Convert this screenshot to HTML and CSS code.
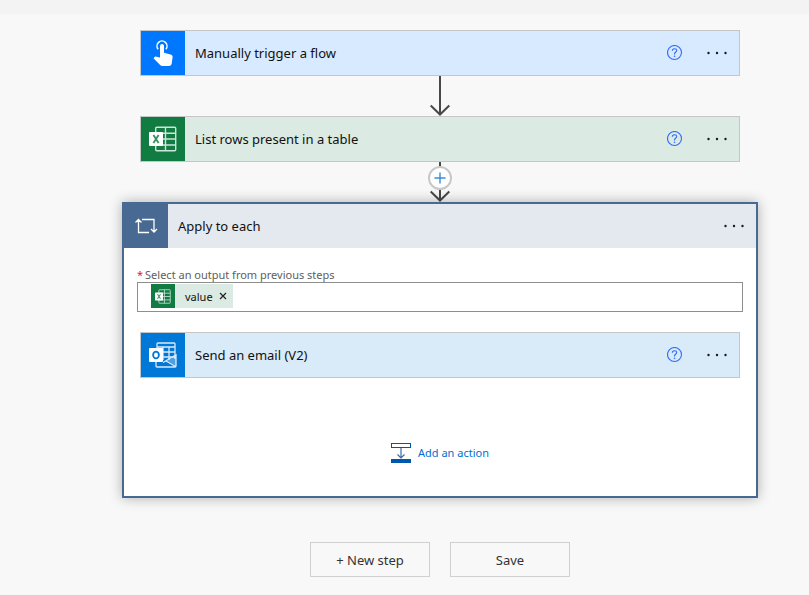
FILE: index.html
```html
<!DOCTYPE html>
<html lang="en">
<head>
<meta charset="utf-8">
<title>Flow designer</title>
<link rel="stylesheet" href="styles.css">
</head>
<body>
<svg class="defs" aria-hidden="true">
  <symbol id="excel" viewBox="0 0 28 26">
    <g fill="none" stroke="#fff" stroke-width="1.4" opacity=".8">
      <rect x="6.700" y="1.2" width="20" height="23.6" rx="1"/>
      <path d="M16.500 1.2v23.6M6.700 7.2h20M14 13h12.700M6.700 19h20"/>
    </g>
    <rect x="0" y="6" width="14" height="14" rx="1" fill="#fff"/>
    <path d="M4.400 9l5.200 8M9.600 9l-5.200 8" fill="none" stroke="#107c41" stroke-width="1.8" opacity=".85"/>
  </symbol>
  <symbol id="help" viewBox="0 0 16 16">
    <g fill="none" stroke="#2f6bff" stroke-width="1.1">
      <circle cx="7.500" cy="7.500" r="7"/>
      <path d="M5.300 5.800C5.300 4.400 6.200 3.700 7.500 3.700s2.200.8 2.200 1.900c0 1.600-2.200 1.800-2.200 3.400v.4"/>
    </g>
    <circle cx="7.500" cy="11.200" r=".8" fill="#2f6bff"/>
  </symbol>
  <symbol id="more" viewBox="0 0 22 4">
    <g fill="#1b1b1b"><circle cx="2.5" cy="2" r="1.2"/><circle cx="11" cy="2" r="1.2"/><circle cx="19.5" cy="2" r="1.2"/></g>
  </symbol>
</svg>
<div class="topbar"></div>
<main class="designer">
  <section class="card card-trigger">
    <span class="tile tile-trigger">
      <svg width="20" height="28" viewBox="0 0 20 28" aria-hidden="true">
        <path d="M5.100 10.200A5 5 0 1 1 12.900 10.200" fill="none" stroke="#fff" stroke-width="1.5"/>
        <path d="M7 7a2 2 0 0 1 4 0v6.700l6.700 1.900c1.300.4 2.100 1.400 1.900 2.700l-.9 6.200c-.2 1.500-1.200 2.500-2.700 2.500H9.500c-1 0-1.700-.4-2.400-1.100L.5 19.200l1.100-1.100c.6-.5 1.100-.6 1.800-.4L7 18.500z" fill="#fff"/>
      </svg>
    </span>
    <h2 class="title">Manually trigger a flow</h2>
    <button class="icon-button help" aria-label="Help"><svg width="16" height="16"><use href="#help"/></svg></button>
    <button class="icon-button" aria-label="More"><svg width="22" height="4"><use href="#more"/></svg></button>
  </section>

  <div class="connector">
    <svg width="24" height="40" viewBox="0 0 24 40" aria-hidden="true"><path d="M12 0v38M2.7 29.5l9.3 9 9.3-9" fill="none" stroke="#484848" stroke-width="2"/></svg>
  </div>

  <section class="card card-excel">
    <span class="tile tile-excel"><svg width="28" height="26" aria-hidden="true"><use href="#excel"/></svg></span>
    <h2 class="title">List rows present in a table</h2>
    <button class="icon-button help" aria-label="Help"><svg width="16" height="16"><use href="#help"/></svg></button>
    <button class="icon-button" aria-label="More"><svg width="22" height="4"><use href="#more"/></svg></button>
  </section>

  <div class="connector">
    <button class="insert" aria-label="Insert a step">
      <svg width="24" height="40" viewBox="0 0 24 40" aria-hidden="true">
        <path d="M12 0v38M2.7 29.5l9.3 9 9.3-9" fill="none" stroke="#484848" stroke-width="2"/>
        <circle cx="12" cy="16" r="11" fill="#fff" stroke="#c8c8c8" stroke-width="2"/>
        <path d="M12 10.5v11M6.500 16h11" fill="none" stroke="#3a8ddb" stroke-width="1.4"/>
      </svg>
    </button>
  </div>

  <section class="scope">
    <header class="scope-header">
      <span class="tile tile-scope">
        <svg width="24" height="18" viewBox="0 0 24 18" fill="none" stroke="#fff" stroke-width="1.3" aria-hidden="true">
          <path d="M15 15.500H4.500V2.500M1.500 5.500l3-3 3 3M8 2.500h12v12.500M17 12l3 3 3-3"/>
        </svg>
      </span>
      <h2 class="title">Apply to each</h2>
      <button class="icon-button" aria-label="More"><svg width="22" height="4"><use href="#more"/></svg></button>
    </header>
    <div class="scope-body">
      <label class="label" for="output"><span class="required">*</span>Select an output from previous steps</label>
      <div class="field">
        <span class="token">
          <span class="token-icon"><svg width="16" height="15" aria-hidden="true"><use href="#excel"/></svg></span>
          <span class="token-text">value</span>
          <button class="token-remove" aria-label="Remove value"><svg width="8" height="8" viewBox="0 0 8 8"><path d="M1 1l6 6M7 1L1 7" stroke="#222" stroke-width="1.2"/></svg></button>
        </span>
        <input class="field-input" id="output" type="text">
      </div>
      <section class="card card-mail">
        <span class="tile tile-mail">
          <svg width="28" height="26" viewBox="0 0 28 26" aria-hidden="true">
            <g fill="none" stroke="#fff" stroke-width="1.3" opacity=".85">
              <path d="M8 7V2q0-1 1-1h16q1 0 1 1v15M8 5h18M14 5v13M20 5v13M14 10h12M14 15h12"/>
              <path d="M7 19v5q0 1 1 1h18q1 0 1-1V13L14 20.500M17 19l9.500 5.500"/>
            </g>
            <path d="M27 14v10l-9-5z" fill="#fff" opacity=".3"/>
            <rect x="0" y="6" width="14" height="14" rx="1" fill="#fff"/>
            <ellipse cx="7" cy="13" rx="2.900" ry="3.400" fill="none" stroke="#0078d7" stroke-width="1.8"/>
          </svg>
        </span>
        <h2 class="title">Send an email (V2)</h2>
        <button class="icon-button help" aria-label="Help"><svg width="16" height="16"><use href="#help"/></svg></button>
        <button class="icon-button" aria-label="More"><svg width="22" height="4"><use href="#more"/></svg></button>
      </section>
      <button class="add-action">
        <svg width="20" height="20" viewBox="0 0 20 20" aria-hidden="true">
          <rect x=".5" y=".5" width="19" height="4" fill="#fff" stroke="#0058ad"/>
          <rect y="16" width="20" height="4" fill="#0058ad"/>
          <path d="M10 5v10M6.500 11.500l3.500 3.500 3.500-3.500" fill="none" stroke="#3c6ca8" stroke-width="1.2"/>
        </svg>
        Add an action
      </button>
    </div>
  </section>

  <div class="actions">
    <button class="button">+ New step</button>
    <button class="button">Save</button>
  </div>
</main>
</body>
</html>
```
FILE: styles.css
```css
* { box-sizing: border-box; }

body {
  margin: 0;
  background: #f8f8f8;
  color: #111;
  font-family: "Noto Sans", "Open Sans", sans-serif;
  font-size: 13px;
}

button {
  border: 0;
  padding: 0;
  background: none;
  font: inherit;
  color: inherit;
  cursor: pointer;
}

svg { display: block; }

.defs { position: absolute; width: 0; height: 0; }

.topbar { height: 14px; background: #f3f3f3; }

.designer {
  display: flex;
  flex-direction: column;
  align-items: center;
  padding: 16px 0 18px 71px;
}

.card {
  display: flex;
  align-items: center;
  width: 100%;
  max-width: 600px;
  border: 1px solid #c4c6c8;
  padding-right: 11px;
}

.card-trigger { background: #d8eaff; }
.card-excel { background: #dbeae2; }
.card-mail { background: #d9eaf8; }

.tile {
  display: flex;
  align-items: center;
  justify-content: center;
  flex: none;
  width: 44px;
  height: 44px;
}

.tile-trigger { background: #0077ff; }
.tile-excel { background: #107c41; }
.tile-scope { background: #486991; }
.tile-mail { background: #0078d7; }

.title {
  flex: 1;
  margin: 0;
  padding-left: 10px;
  font-size: 13px;
  line-height: 20px;
  font-weight: 400;
}

.help { margin-right: 23px; }

.connector { height: 40px; }

.scope {
  width: 100%;
  max-width: 636px;
  border: 2px solid #486991;
  background: #fff;
  box-shadow: 0 0 12px rgba(0, 0, 0, 0.3);
}

.scope-header {
  display: flex;
  align-items: center;
  padding-right: 11px;
  background: #e4e8ef;
}

.scope-body {
  display: flex;
  flex-direction: column;
  align-items: center;
  padding: 20px 13px 33px;
}

.label {
  align-self: stretch;
  font-size: 11px;
  line-height: 14px;
  color: #605e5c;
}

.required { margin-right: 2px; color: #e0202c; }

.field {
  display: flex;
  align-self: stretch;
  height: 30px;
  margin-bottom: 20px;
  border: 1px solid #8e8e8e;
  padding: 1px 13px;
}

.token {
  display: flex;
  align-items: center;
  height: 24px;
  padding-right: 6px;
  background: #dbeae2;
  font-size: 11px;
}

.token-icon {
  display: flex;
  align-items: center;
  justify-content: center;
  width: 24px;
  height: 24px;
  background: #107c41;
}

.token-text { padding: 0 6px 0 10px; }

.field-input {
  flex: 1;
  min-width: 0;
  border: 0;
  padding: 0 4px;
  outline: 0;
  background: none;
  font: inherit;
}

.add-action {
  display: flex;
  align-items: center;
  gap: 7px;
  margin-top: 65px;
  font-size: 11px;
  line-height: 20px;
  color: #0070cc;
}

.actions {
  display: flex;
  gap: 20px;
  margin-top: 44px;
}

.button {
  width: 120px;
  height: 35px;
  border: 1px solid #d0d0d0;
  color: #333;
}
```
